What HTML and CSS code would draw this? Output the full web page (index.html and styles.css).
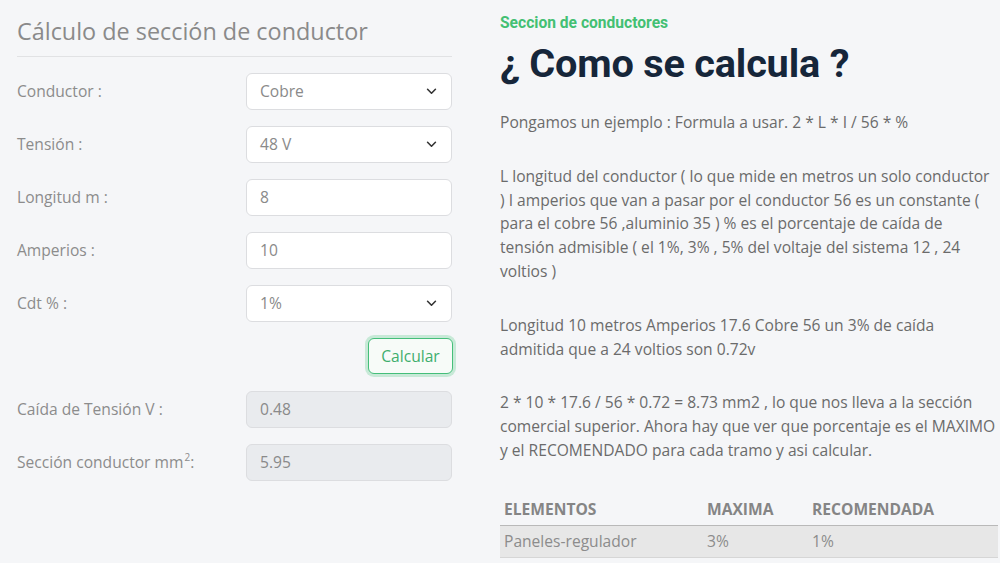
FILE: index.html
```html
<!DOCTYPE html>
<html lang="es">
<head>
<meta charset="utf-8">
<link rel="stylesheet" href="styles.css">
</head>
<body>
<div class="page">
  <section class="calc">
    <h2 class="calc-title">Cálculo de sección de conductor</h2>
    <div class="rows">
      <div class="row">
        <label class="lbl">Conductor :</label>
        <div class="field select"><span>Cobre</span><svg class="chev" viewBox="0 0 12 8" width="11" height="7"><path d="M1.5 1.5 L6 6 L10.5 1.5" fill="none" stroke="#333" stroke-width="1.8" stroke-linecap="round" stroke-linejoin="round"/></svg></div>
      </div>
      <div class="row">
        <label class="lbl">Tensión :</label>
        <div class="field select"><span>48 V</span><svg class="chev" viewBox="0 0 12 8" width="11" height="7"><path d="M1.5 1.5 L6 6 L10.5 1.5" fill="none" stroke="#333" stroke-width="1.8" stroke-linecap="round" stroke-linejoin="round"/></svg></div>
      </div>
      <div class="row">
        <label class="lbl">Longitud m :</label>
        <div class="field"><span>8</span></div>
      </div>
      <div class="row">
        <label class="lbl">Amperios :</label>
        <div class="field"><span>10</span></div>
      </div>
      <div class="row">
        <label class="lbl">Cdt % :</label>
        <div class="field select"><span>1%</span><svg class="chev" viewBox="0 0 12 8" width="11" height="7"><path d="M1.5 1.5 L6 6 L10.5 1.5" fill="none" stroke="#333" stroke-width="1.8" stroke-linecap="round" stroke-linejoin="round"/></svg></div>
      </div>
      <div class="btn-row">
        <button class="btn">Calcular</button>
      </div>
      <div class="row">
        <label class="lbl">Caída de Tensión V :</label>
        <div class="field disabled"><span>0.48</span></div>
      </div>
      <div class="row">
        <label class="lbl">Sección conductor mm<sup>2</sup>:</label>
        <div class="field disabled"><span>5.95</span></div>
      </div>
    </div>
  </section>
  <section class="info">
    <div class="eyebrow">Seccion de conductores</div>
    <h1 class="headline">¿ Como se calcula ?</h1>
    <p>Pongamos un ejemplo : Formula a usar. 2 * L * I / 56 * %</p>
    <p>L longitud del conductor ( lo que mide en metros un solo conductor ) I amperios que van a pasar por el conductor 56 es un constante ( para el cobre 56 ,aluminio 35 ) % es el porcentaje de caída de tensión admisible ( el 1%, 3% , 5% del voltaje del sistema 12 , 24 voltios )</p>
    <p>Longitud 10 metros Amperios 17.6 Cobre 56 un 3% de caída admitida que a 24 voltios son 0.72v</p>
    <p>2 * 10 * 17.6 / 56 * 0.72 = 8.73 mm2 , lo que nos lleva a la sección comercial superior. Ahora hay que ver que porcentaje es el MAXIMO y el RECOMENDADO para cada tramo y asi calcular.</p>
    <table class="tbl">
      <thead>
        <tr><th class="c1">ELEMENTOS</th><th class="c2">MAXIMA</th><th>RECOMENDADA</th></tr>
      </thead>
      <tbody>
        <tr><td>Paneles-regulador</td><td>3%</td><td>1%</td></tr>
      </tbody>
    </table>
  </section>
</div>
</body>
</html>
```
FILE: styles.css
```css
* { box-sizing: border-box; }
html, body {
  margin: 0;
  padding: 0;
  background: #f5f6f8;
  font-family: "Open Sans", "Liberation Sans", sans-serif;
  overflow: hidden;
}
.page {
  display: flex;
  gap: 48px;
  height: 563px;
}
.calc {
  width: 452px;
  padding-left: 17px;
  flex: none;
}
.calc-title {
  margin: 0;
  padding-top: 14px;
  height: 57px;
  font-weight: 400;
  font-size: 23.4px;
  line-height: 34px;
  color: #8a8a8a;
  border-bottom: 1px solid #e1e2e4;
}
.rows {
  display: flex;
  flex-direction: column;
  gap: 16px;
  padding-top: 16px;
}
.row {
  display: flex;
  align-items: center;
  justify-content: space-between;
  height: 37px;
}
.lbl {
  font-size: 15.6px;
  line-height: 20px;
  padding-bottom: 2px;
  color: #8c8c8c;
}
.lbl sup {
  font-size: 10px;
  line-height: 0;
  margin-left: 1px;
}
.field {
  width: 206px;
  height: 37px;
  border: 1px solid #dcdde0;
  border-radius: 6px;
  background: #fff;
  display: flex;
  align-items: center;
  justify-content: space-between;
  padding: 0 14px 2px 13px;
  font-size: 15.6px;
  color: #8a8a8a;
}
.field.disabled {
  background: #e9ebee;
}
.chev { display: block; margin-top: 2px; }
.btn-row {
  display: flex;
  justify-content: flex-end;
  height: 36px;
  margin-bottom: 1px;
}
.btn {
  height: 36px;
  width: 85px;
  margin-right: -1px;
  border: 1.5px solid #45be7a;
  border-radius: 6px;
  background: #f7fbf8;
  color: #3eae6e;
  font-family: "Open Sans", "Liberation Sans", sans-serif;
  font-size: 15.6px;
  padding: 0;
  box-shadow: 0 0 0 3px rgba(80, 200, 130, 0.28);
}
.info {
  flex: 1;
  padding-top: 14px;
  padding-right: 2px;
}
.eyebrow {
  font-family: Roboto, "Liberation Sans", sans-serif;
  font-weight: 700;
  font-size: 15.6px;
  line-height: 18px;
  color: #43c073;
}
.headline {
  margin: 9px 0 0;
  font-family: Roboto, "Liberation Sans", sans-serif;
  font-weight: 700;
  font-size: 39.7px;
  line-height: 46px;
  color: #16263a;
  letter-spacing: -0.2px;
}
.info p {
  margin: 24px 0 0;
  max-width: 497px;
  font-size: 15.6px;
  line-height: 23.8px;
  color: #6b6b6b;
}
.info p + p { margin-top: 30px; }
.tbl {
  width: 100%;
  margin-top: 30px;
  border-collapse: collapse;
  font-size: 15.6px;
}
.tbl th {
  text-align: left;
  font-weight: 700;
  color: #858585;
  padding: 6px 4px 6px;
  border-bottom: 1px solid #b9b9b9;
  line-height: 20px;
}
.tbl .c1 { width: 203px; }
.tbl .c2 { width: 105px; }
.tbl td {
  background: #e7e7e7;
  color: #8c8c8c;
  padding: 6px 4px;
  line-height: 19px;
  border-bottom: 1px solid #d6d6d6;
}
```
